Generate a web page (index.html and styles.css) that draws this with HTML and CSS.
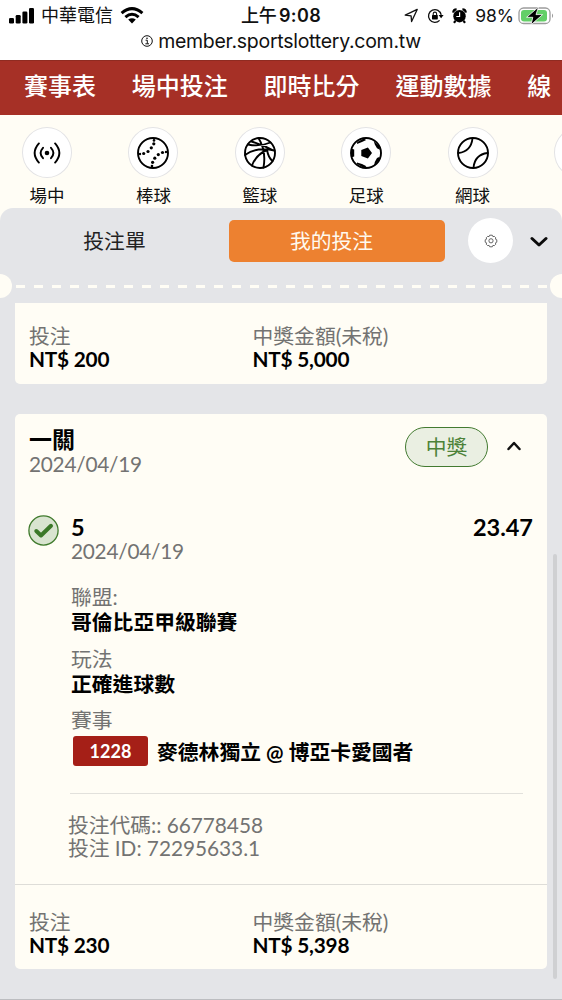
FILE: index.html
```
<!DOCTYPE html>
<html lang="zh-Hant">
<head>
<meta charset="utf-8">
<title>我的投注</title>
<link rel="stylesheet" href="styles.css">
</head>
<body>
<div class="screen">
  <header class="status">
    <div class="status-row">
      <div class="carrier">
        <svg width="26" height="17" viewBox="0 0 26 17"><rect x="0" y="11" width="5" height="5.5" rx="1.3"/><rect x="6.7" y="8" width="5" height="8.5" rx="1.3"/><rect x="13.4" y="4.5" width="5" height="12" rx="1.3"/><rect x="20" y="1" width="5" height="15.5" rx="1.3"/></svg>
        <span class="carrier-name">中華電信</span>
        <svg width="24" height="17" viewBox="0 0 24 17"><g fill="none" stroke="#000" stroke-width="3"><path d="M1.6 6.2Q12-3 22.4 6.2"/><path d="M5.4 10.2Q12 4.4 18.6 10.2"/></g><path d="M8.2 12.6Q12 9.8 15.8 12.6L12 16.6z"/></svg>
      </div>
      <div class="clock">上午<span class="time">9:08</span></div>
      <div class="indicators">
        <svg width="15" height="15" viewBox="0 0 15 15"><path d="M1.2 7.2L13.2 1.4L7.6 13.6L7.1 7.9z" fill="none" stroke="#111" stroke-width="1.3" stroke-linejoin="round"/></svg>
        <svg width="17" height="16" viewBox="0 0 17 16"><path d="M12.6 12.4A6.4 6.4 0 1 1 14.2 6.8" fill="none" stroke="#111" stroke-width="1.3"/><path d="M11.6 7h5l-2.5 3.2z"/><rect x="5" y="7" width="5.8" height="4.4" rx=".6"/><path d="M6.2 7.4V5.8a1.7 1.7 0 0 1 3.4 0v1.6" fill="none" stroke="#111" stroke-width="1.1"/></svg>
        <svg width="15" height="16" viewBox="0 0 15 16"><circle cx="7.5" cy="8.2" r="6.2"/><path d="M1.2 4.6Q1.400 1.400 4.600 1.400M13.800 4.600Q13.600 1.400 10.400 1.400M3.400 12.800L2 14.800M11.600 12.800L13 14.800" fill="none" stroke="#000" stroke-width="2.200"/><path d="M7.600 4.300V8.500H4.300" fill="none" stroke="#fff" stroke-width="1.200"/></svg>
        <span class="percent">98%</span>
        <svg width="37" height="20" viewBox="0 0 37 20"><rect x="1" y="2" width="31" height="15.5" rx="4.6" fill="#fff" stroke="#9c9c9c" stroke-width="1.3"/><rect x="3" y="4" width="26" height="11.5" rx="3" fill="#63cf67"/><path d="M34 7.4q2.2 2.2 0 4.6z" fill="#9c9c9c"/><path d="M20.5 1L8.600 11.300h6.200L13 18.800L24.600 8.600H18z" stroke="#fff" stroke-width=".8"/></svg>
      </div>
    </div>
    <div class="address">
      <svg width="12" height="12" viewBox="0 0 12 12"><circle cx="6" cy="6" r="5.3" fill="none" stroke="#111"/><path d="M4.6 5.2h1.7v3.4M4.4 8.8h3.6" fill="none" stroke="#111"/><circle cx="6" cy="3.2" r=".8"/></svg>
      <span class="url">member.sportslottery.com.tw</span>
    </div>
  </header>

  <nav class="nav"><span>賽事表</span><span>場中投注</span><span>即時比分</span><span>運動數據</span><span>線</span></nav>

  <section class="sports">
    <div class="sport"><div class="disc"><svg width="32" height="32" viewBox="0 0 32 32"><circle cx="16" cy="16" r="2.3"/><g class="ink"><path d="M12 10.8Q7.2 16 12 21.2M20 10.8Q24.800 16 20 21.200M7.900 6.400Q-.6 16 7.900 25.600M24.100 6.400Q32.600 16 24.100 25.600"/></g></svg></div>場中</div>
    <div class="sport"><div class="disc"><svg width="32" height="32" viewBox="0 0 32 32"><g class="ink"><circle cx="16" cy="16" r="15"/></g><circle cx="17" cy="3.400" r="1.300"/><circle cx="16.800" cy="6.800" r="1.600"/><circle cx="14.300" cy="10.800" r="1.600"/><circle cx="11" cy="14.500" r="1.600"/><circle cx="6.700" cy="16.500" r="1.600"/><circle cx="3" cy="17" r="1.200"/><circle cx="29" cy="15" r="1.200"/><circle cx="25.500" cy="15.500" r="1.600"/><circle cx="21.300" cy="17.600" r="1.600"/><circle cx="17.800" cy="21.200" r="1.600"/><circle cx="15.600" cy="25.300" r="1.600"/><circle cx="15" cy="29" r="1.300"/></svg></div>棒球</div>
    <div class="sport"><div class="disc"><svg width="32" height="32" viewBox="0 0 32 32"><g class="ink"><circle cx="16" cy="16" r="15"/><path d="M14.500 1Q22.500 14 19.500 30.500M4 7.500Q16 10 26.500 5.500M7.500 4.500Q21 9 30.500 14M1 18Q13 9.500 30.500 13.500M8 28.500Q12 17.500 24 12.500M23 13Q24.500 21 28.500 24"/></g></svg></div>籃球</div>
    <div class="sport"><div class="disc"><svg width="32" height="32" viewBox="0 0 32 32"><g class="ink"><circle cx="16" cy="16" r="15"/></g><path d="M11.300 13L17.900 10.500L22 16L17.900 21.500L11.300 19zM7.200 5L13.700 1.400L16.200 3L12 5L7 7zM23.700 3.800L29.700 9.800L29.900 12.800L27 11.200L24.800 7.500zM1 11.500L4.200 12.600L4.200 19.400L1 20.500zM24.800 25L27 21L29.700 19.800L29 23L24 29zM7 25.400L12 27L16.500 29.300L14 31L7 27z"/></svg></div>足球</div>
    <div class="sport"><div class="disc"><svg width="32" height="32" viewBox="0 0 32 32"><g class="ink"><circle cx="16" cy="16" r="15"/><path d="M15.500 1.500Q14 14.500 1.500 16M30.500 16Q18 17.500 16.500 30.500"/></g></svg></div>網球</div>
    <div class="sport"><div class="disc"></div></div>
  </section>

  <main class="panel">
    <div class="tabs">
      <div class="tab">投注單</div>
      <div class="tab active">我的投注</div>
      <div class="gear"><svg width="14" height="14" viewBox="0 0 14 14"><path d="M5.700 1.200h2.600l.6 1.400 1.500-.2 1.300 1.300-.2 1.500 1.300.6v2.400l-1.300.6.2 1.500-1.300 1.300-1.500-.2-.6 1.400H5.700l-.6-1.400-1.500.2-1.300-1.300.2-1.500-1.300-.6V5.800l1.300-.6-.2-1.500 1.300-1.300 1.500.2z" fill="none" stroke="#555" stroke-width=".9" stroke-linejoin="round"/><circle cx="7" cy="6.800" r="2.100" fill="none" stroke="#555" stroke-width=".9"/></svg></div>
      <svg class="collapse" width="18" height="12" viewBox="0 0 18 12"><path d="M2 2.500L9 9L16 2.500" fill="none" stroke="#0b0b0b" stroke-width="3" stroke-linecap="round" stroke-linejoin="round"/></svg>
    </div>
    <div class="tear"><i class="notch"></i><i class="dashes"></i><i class="notch right"></i></div>

    <article class="card clipped">
      <div class="totals">
        <div><p>投注</p><b>NT$ 200</b></div>
        <div><p>中獎金額(未稅)</p><b>NT$ 5,000</b></div>
      </div>
    </article>

    <article class="card ticket">
      <div class="ticket-head">
        <div><h2>一關</h2><p class="date">2024/04/19</p></div>
        <div class="pill">中獎</div>
        <svg class="fold" width="16" height="12" viewBox="0 0 16 12"><path d="M2.500 9L8 3L13.500 9" fill="none" stroke="#111" stroke-width="2.500" stroke-linecap="round" stroke-linejoin="round"/></svg>
      </div>
      <div class="pick">
        <svg width="31" height="31" viewBox="0 0 31 31"><circle cx="15.500" cy="15.500" r="14.600" fill="#d9e4d0" stroke="#3f7a2c" stroke-width="1.300"/><path d="M8.300 16L13 20.500L23 10.800" fill="none" stroke="#3b7828" stroke-width="4" stroke-linecap="round" stroke-linejoin="round"/></svg>
        <div class="pick-body">
          <div class="pick-title"><span>5</span><span>23.47</span></div>
          <p class="date">2024/04/19</p>
          <dl>
            <dt>聯盟:</dt><dd>哥倫比亞甲級聯賽</dd>
            <dt>玩法</dt><dd>正確進球數</dd>
            <dt>賽事</dt>
          </dl>
          <div class="match"><span class="code">1228</span><span>麥德林獨立 @ 博亞卡愛國者</span></div>
          <div class="refs"><p>投注代碼:: 66778458</p><p>投注 ID: 72295633.1</p></div>
        </div>
      </div>
      <div class="totals bottom">
        <div><p>投注</p><b>NT$ 230</b></div>
        <div><p>中獎金額(未稅)</p><b>NT$ 5,398</b></div>
      </div>
    </article>
    <i class="scrollbar"></i>
  </main>
</div>
</body>
</html>
```
FILE: styles.css
```
* { box-sizing: border-box; }
body, p, h2, dl, dd { margin: 0; }
body { background: #fffdf5; color: #000; font-family: Lato, "Noto Sans CJK TC", sans-serif; font-size: 20.8px; line-height: 23px; }
svg { display: block; flex: none; }
i { display: block; }
.screen { width: 562px; height: 1000px; overflow: hidden; display: flex; flex-direction: column; }

.status { height: 60px; background: #fff; font-family: Inter, "Noto Sans CJK TC", sans-serif; color: #111; }
.status-row { height: 31px; display: grid; grid-template-columns: 200px 162px 200px; align-items: center; font-size: 18px; }
.carrier { display: flex; align-items: center; gap: 6px; padding-left: 9px; }
.carrier-name { width: 73px; white-space: nowrap; }
.clock { text-align: center; font-size: 18px; font-weight: 500; white-space: nowrap; }
.time { margin-left: 2px; letter-spacing: .4px; font-weight: 600; }
.indicators { display: flex; align-items: center; justify-content: flex-end; gap: 8px; padding-right: 7px; }
.percent { margin: 0 -4px 0 0; font-size: 17.500px; }
.address { display: flex; align-items: center; justify-content: center; gap: 5px; height: 19px; }
.url { font-size: 19.5px; line-height: 20px; letter-spacing: -.27px; }

.nav { height: 55px; background: #a63026; border-top: 1px solid #8f2b21; color: #fff; font-size: 24px; font-weight: 500; line-height: 50px; display: flex; gap: 35.800px; padding-left: 24px; white-space: nowrap; }

.sports { height: 93px; display: flex; gap: 56.400px; padding: 12px 0 0 22px; }
.sport { width: 50px; flex: none; text-align: center; font-size: 17.500px; line-height: 36px; color: #111; }
.disc { width: 50px; height: 51px; border: 1px solid #e3e3e5; border-radius: 50%; background: #fff; display: grid; place-items: center; }
.ink { fill: none; stroke: #000; stroke-width: 1.900; stroke-linecap: round; }

.panel { position: relative; flex: 1; background: #e4e5e8; border-radius: 13px 13px 0 0; border-bottom: 1px solid #bcbdc0; }
.tabs { height: 65px; display: flex; align-items: center; }
.tab { width: 229px; text-align: center; color: #222; }
.tab.active { width: 216px; height: 42px; line-height: 41px; padding-right: 11px; background: #ed8130; color: #fff9ee; border-radius: 5px; }
.gear { width: 45px; height: 45px; margin-left: 23px; background: #fff; border-radius: 50%; display: grid; place-items: center; }
.collapse { margin: 3px 0 0 17px; }
.tear { height: 24px; display: flex; align-items: center; overflow: hidden; margin-top: 1px; }
.notch { width: 24px; height: 24px; margin-left: -12px; border-radius: 50%; background: #fffdf5; flex: none; }
.notch.right { margin: 0 -12px 0 0; }
.dashes { flex: 1; height: 3px; margin: 1px 3px 0 4px; background: repeating-linear-gradient(90deg, #fffdf5 0 9px, transparent 9px 18px); }

.card { width: 532px; margin-left: 15px; background: #fffdf5; border-radius: 5px; }
.clipped { height: 81px; margin-top: 5px; border-radius: 0 0 5px 5px; }
.card p, dt { color: #737372; }
.card b, dd, h2 { font-weight: 700; }
.card b { letter-spacing: -.22px; }
.card .date { letter-spacing: -.25px; }
.totals { display: grid; grid-template-columns: 223.500px 1fr; padding: 22px 14px 0; line-height: 22.500px; }
.totals.bottom { border-top: 1px solid #deddd8; padding-top: 26px; height: 85px; }
.ticket { height: 555px; margin-top: 30px; display: flex; flex-direction: column; }
.ticket-head { display: flex; align-items: flex-start; padding: 12px 25px 0 14px; height: 60px; }
.ticket-head > div:first-child { flex: 1; }
h2 { font-size: 23px; line-height: 26px; }
.pill { width: 83px; height: 40px; margin: 1px 18px 0 0; border: 1.500px solid #427a30; border-radius: 20px; background: #eaefe2; color: #4c8238; text-align: center; line-height: 37px; }
.fold { margin-top: 14px; }
.pick { flex: 1; display: flex; gap: 12px; padding: 41px 14px 0 13px; }
.pick-body { flex: 1; }
.pick-title { display: flex; justify-content: space-between; font-size: 23.500px; font-weight: 700; line-height: 24px; }
.pick-body > .date { line-height: 24px; }
dl { margin-top: 22px; }
dt { line-height: 24px; }
dd { margin-bottom: 11.500px; line-height: 26px; }
.match { display: flex; align-items: center; gap: 9px; margin: 4px 0 0 2px; font-weight: 700; white-space: nowrap; }
.code { width: 75px; height: 30px; background: #a51f17; border-radius: 3px; color: #fff; font-size: 18px; line-height: 30px; text-align: center; }
.refs { margin: 27px 10px 0 -1px; border-top: 1.500px solid #e2e1dc; padding: 20px 0 0; line-height: 22.500px; }
.refs p { margin-left: -2px; letter-spacing: -.03px; }
.scrollbar { position: absolute; right: 5px; top: 346px; width: 4px; height: 425px; border-radius: 2px; background: #cfd0d2; }
```
